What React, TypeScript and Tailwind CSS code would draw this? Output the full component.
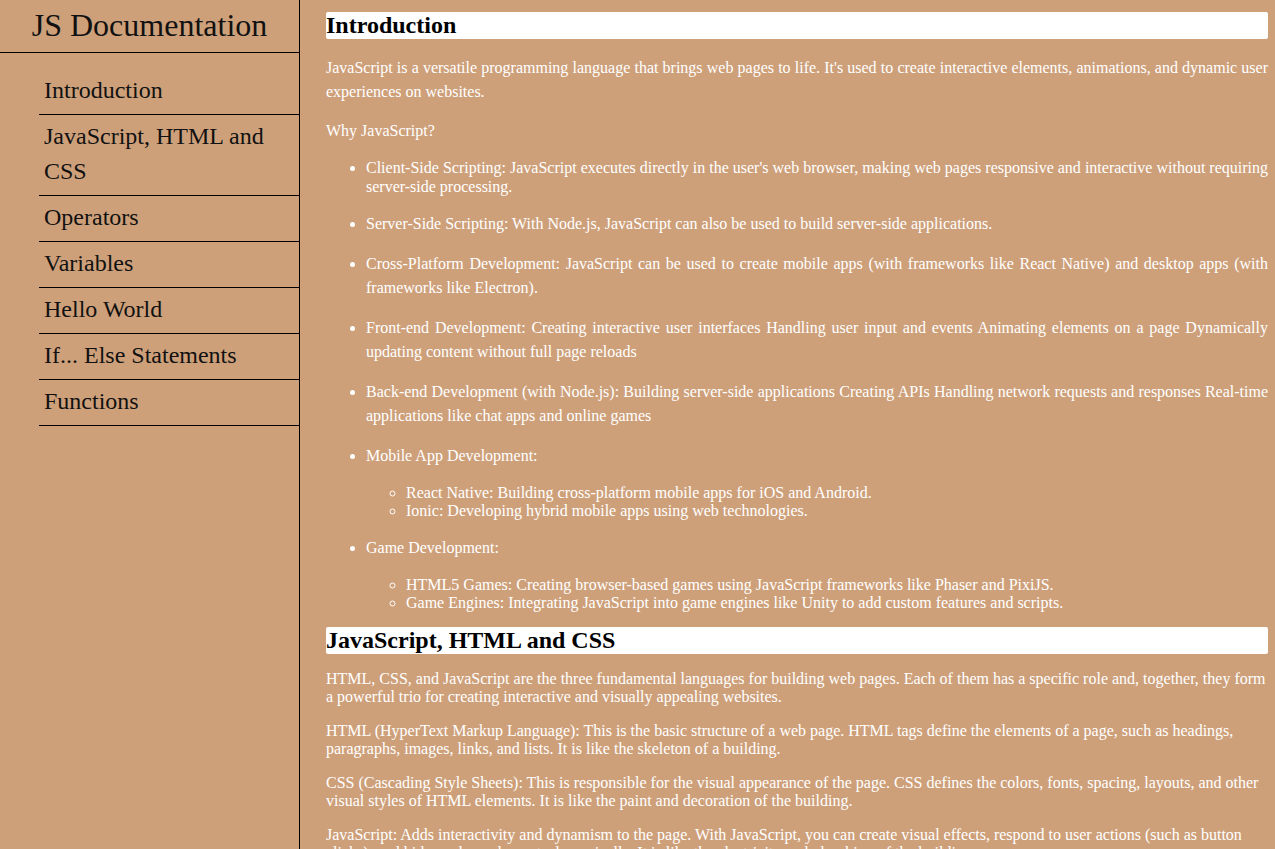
const navItems = [
  'Introduction',
  'JavaScript, HTML and CSS',
  'Operators',
  'Variables',
  'Hello World',
  'If... Else Statements',
  'Functions',
];

function Sidebar() {
  return (
    <nav className="w-[300px] shrink-0 h-full border-r border-black text-[#111] font-['Liberation_Serif','Times_New_Roman',serif]">
      <header className="border-b border-black h-[53px] flex items-center justify-center">
        <h1 className="text-[32px] leading-[37px] -mt-px">JS Documentation</h1>
      </header>
      <ul className="mt-4 pl-[39px]">
        {navItems.map((item) => (
          <li key={item} className="border-b border-black pl-[5px] pr-2 pt-[4px] pb-[6px] text-[24px] leading-[35px]">
            <a href="#">{item}</a>
          </li>
        ))}
      </ul>
    </nav>
  );
}

function Heading({ children }: { children: React.ReactNode }) {
  return (
    <h2 className="bg-white rounded-[2px] text-black font-bold text-[24px] leading-[27px]">
      {children}
    </h2>
  );
}

export default function App() {
  return (
    <div
      className="h-screen overflow-hidden flex bg-[#cea07a]"
      style={{ fontFamily: '"Liberation Serif", "Times New Roman", serif' }}
    >
      <Sidebar />
      <main className="flex-1 pl-[26px] pr-[7px] pt-[12px] text-white text-[16px]">
        <section className="text-justify">
          <Heading>Introduction</Heading>
          <p className="mt-[17px] leading-[24px]">
            JavaScript is a versatile programming language that brings web pages to life. It's used to create
            interactive elements, animations, and dynamic user experiences on websites.
          </p>
          <p className="mt-[15px] leading-[24px]">Why JavaScript?</p>
          <ul className="mt-4 pl-10 list-disc">
            <li className="leading-[18.5px]">
              Client-Side Scripting: JavaScript executes directly in the user's web browser, making web pages
              responsive and interactive without requiring server-side processing.
            </li>
            <li>
              <p className="mt-4 leading-[24px]">
                Server-Side Scripting: With Node.js, JavaScript can also be used to build server-side applications.
              </p>
            </li>
            <li>
              <p className="mt-4 leading-[24px]">
                Cross-Platform Development: JavaScript can be used to create mobile apps (with frameworks like React
                Native) and desktop apps (with frameworks like Electron).
              </p>
            </li>
            <li>
              <p className="mt-4 leading-[24px]">
                Front-end Development: Creating interactive user interfaces Handling user input and events Animating
                elements on a page Dynamically updating content without full page reloads
              </p>
            </li>
            <li>
              <p className="mt-4 leading-[24px]">
                Back-end Development (with Node.js): Building server-side applications Creating APIs Handling network
                requests and responses Real-time applications like chat apps and online games
              </p>
            </li>
            <li>
              <p className="mt-4 leading-[24px]">Mobile App Development:</p>
              <ul className="mt-4 pl-10 list-[circle] leading-[18px]">
                <li>React Native: Building cross-platform mobile apps for iOS and Android.</li>
                <li>Ionic: Developing hybrid mobile apps using web technologies.</li>
              </ul>
            </li>
            <li>
              <p className="mt-4 leading-[24px]">Game Development:</p>
              <ul className="mt-4 pl-10 list-[circle] leading-[18px]">
                <li>HTML5 Games: Creating browser-based games using JavaScript frameworks like Phaser and PixiJS.</li>
                <li>
                  Game Engines: Integrating JavaScript into game engines like Unity to add custom features and scripts.
                </li>
              </ul>
            </li>
          </ul>
        </section>
        <section className="mt-[15px] leading-[18px]">
          <Heading>JavaScript, HTML and CSS</Heading>
          <p className="mt-4">
            HTML, CSS, and JavaScript are the three fundamental languages for building web pages. Each of them has a
            specific role and, together, they form a powerful trio for creating interactive and visually appealing
            websites.
          </p>
          <p className="mt-4">
            HTML (HyperText Markup Language): This is the basic structure of a web page. HTML tags define the elements
            of a page, such as headings, paragraphs, images, links, and lists. It is like the skeleton of a building.
          </p>
          <p className="mt-4">
            CSS (Cascading Style Sheets): This is responsible for the visual appearance of the page. CSS defines the
            colors, fonts, spacing, layouts, and other visual styles of HTML elements. It is like the paint and
            decoration of the building.
          </p>
          <p className="mt-4">
            JavaScript: Adds interactivity and dynamism to the page. With JavaScript, you can create visual effects,
            respond to user actions (such as button clicks), and hide or show elements dynamically. It is like the
            electricity and plumbing of the building.
          </p>
        </section>
      </main>
    </div>
  );
}
